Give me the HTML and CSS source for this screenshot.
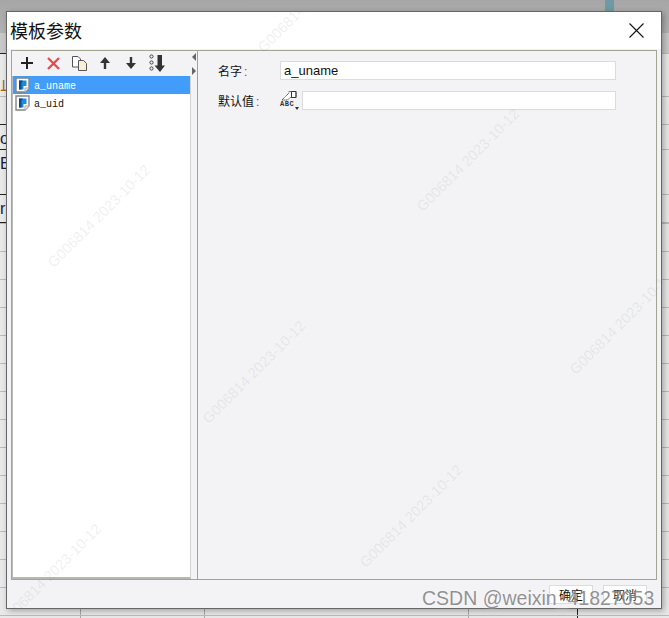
FILE: index.html
```html
<!DOCTYPE html>
<html lang="en">
<head>
  <meta charset="UTF-8">
  <meta name="viewport" content="width=device-width, initial-scale=1.0">
  <title>模板参数</title>
  <link rel="stylesheet" href="styles.css">
</head>
<body>
<div class="sheet">
  <div class="sheet-top"></div>
  <div class="sheet-head"></div>
  <div class="sheet-row first orange">止</div>
  <div class="sheet-row dark"></div>
  <div class="sheet-row short-row dark">o</div>
  <div class="sheet-row mid dark">E</div>
  <div class="sheet-row dark">r</div>
  <div class="sheet-grid"></div>
</div>
<div class="teal-tab"></div>

<div class="dialog">
  <div class="marks">
    <span class="mark m1">G006814 2023-10-12</span>
    <span class="mark m2">G006814 2023-10-12</span>
    <span class="mark m3">G006814 2023-10-12</span>
    <span class="mark m4">G006814 2023-10-12</span>
    <span class="mark m5">G006814 2023-10-12</span>
    <span class="mark m6">G006814 2023-10-12</span>
    <span class="mark m7">G006814 2023-10-12</span>
  </div>

  <div class="title-bar">
    <div class="title">模板参数</div>
    <svg class="close" width="15" height="15" viewBox="0 0 15 15"><path d="M0.5 0.5L14.5 14.5M14.5 0.5L0.5 14.5" stroke="#111" stroke-width="1.1" fill="none"/></svg>
  </div>

  <div class="content">
    <div class="panel">
      <div class="left">
        <div class="toolbar">
          <div class="tool"><svg width="14" height="14" viewBox="0 0 14 14"><path d="M7 1V13M1 7H13" stroke="#222" stroke-width="2" fill="none"/></svg></div>
          <div class="tool"><svg width="15" height="15" viewBox="0 0 15 15"><path d="M2 2L13 13M13 2L2 13" stroke="#ec4a4a" stroke-width="2.4" fill="none"/></svg></div>
          <div class="tool"><svg width="17" height="17" viewBox="0 0 17 17"><path d="M1.5 1.5H7L9.5 4V12H1.5Z" fill="#fff" stroke="#555"/><path d="M7.5 5.5H12.5L15.5 8.5V15.5H7.5Z" fill="#f8efd8" stroke="#555"/></svg></div>
          <div class="tool"><svg width="12" height="14" viewBox="0 0 12 14"><path d="M6 1L11 7H7.2V13H4.8V7H1Z" fill="#333"/></svg></div>
          <div class="tool"><svg width="12" height="14" viewBox="0 0 12 14"><path d="M6 13L11 7H7.2V1H4.8V7H1Z" fill="#333"/></svg></div>
          <div class="tool"><svg width="16" height="18" viewBox="0 0 16 18"><circle cx="2.5" cy="2.5" r="1.6" fill="none" stroke="#444"/><circle cx="2.5" cy="8.5" r="1.6" fill="none" stroke="#444"/><circle cx="2.5" cy="14.5" r="1.6" fill="none" stroke="#444"/><path d="M11 18L16 11.5H13V1H8.5V11.5H5.5Z" fill="#333"/></svg></div>
        </div>
        <div class="list">
          <div class="item selected">
            <svg class="file" width="15" height="16" viewBox="0 0 15 16"><path d="M1 1H14V11L10 15H1Z" fill="#fff" stroke="#858585" stroke-width="1.4"/><path d="M10 15V11H14" fill="#eee" stroke="#aaa"/><path d="M4 3.5H11.5V9H8.5V12.5H4Z" fill="#1a8ae0"/><path d="M4 3.5H7.5V5H6.5V12.5H4Z" fill="#0b4a8f"/></svg>
            <span>a_uname</span>
          </div>
          <div class="item">
            <svg class="file" width="15" height="16" viewBox="0 0 15 16"><path d="M1 1H14V11L10 15H1Z" fill="#fff" stroke="#858585" stroke-width="1.4"/><path d="M10 15V11H14" fill="#eee" stroke="#aaa"/><path d="M4 3.5H11.5V9H8.5V12.5H4Z" fill="#1a8ae0"/><path d="M4 3.5H7.5V5H6.5V12.5H4Z" fill="#0b4a8f"/></svg>
            <span>a_uid</span>
          </div>
        </div>
      </div>

      <div class="splitter">
        <i class="arrow-left"></i>
        <i class="arrow-right"></i>
      </div>

      <div class="right">
        <div class="field">
          <label>名字<em>:</em></label>
          <div class="input">a_uname</div>
        </div>
        <div class="field">
          <label>默认值<em>:</em></label>
          <div class="abc">
            <svg width="16" height="11" viewBox="0 0 16 11"><path d="M1 10L8 3V1.5H15V7.5H9L6.5 10Z" fill="#fff" stroke="#444" stroke-dasharray="1.2 .6"/><path d="M10.5 1.5V7.5M10.5 1.5H15V7.5H10.5" stroke="#333" fill="none"/></svg>
            <span class="abc-text">ABC</span>
            <i class="caret"></i>
          </div>
          <div class="input short"></div>
        </div>
      </div>
    </div>

    <div class="buttons">
      <button>确定</button>
      <button>取消</button>
    </div>
  </div>
</div>

<div class="csdn">CSDN @weixin_41827053</div>
</body>
</html>
```

FILE: styles.css
```css
* {
  margin: 0;
  padding: 0;
  box-sizing: border-box;
}

body {
  width: 669px;
  height: 618px;
  overflow: hidden;
  position: relative;
  background-color: #e9e9e9;
  font-family: "Liberation Sans", "Noto Sans CJK SC", sans-serif;
}

/* spreadsheet behind the dialog */
.sheet {
  height: 618px;
  overflow: hidden;
}

.sheet-top {
  height: 33px;
  background: linear-gradient(#a6a6a6, #b2b2b2);
}

.sheet-head {
  height: 21px;
  background-color: #c8c8c8;
  border-bottom: 1px solid #222;
  border-image: linear-gradient(90deg, #222 10px, #bbb 10px) 1;
}

.sheet-row {
  height: 28px;
  font-size: 16px;
  line-height: 27px;
  color: #1a1a3a;
  border-bottom: 1px solid #bbb;
}

.sheet-row.dark {
  border-image: linear-gradient(90deg, #222 10px, #bbb 10px) 1;
}

.sheet-row.first {
  height: 43px;
  line-height: 62px;
}

.sheet-row.short-row {
  height: 25px;
}

.sheet-row.mid {
  height: 45px;
}

.orange {
  color: #a8620f;
}

.sheet-grid {
  height: 400px;
  background-image:
    repeating-linear-gradient(#bbb 0, #bbb 1px, transparent 1px, transparent 28px),
    linear-gradient(90deg, transparent 80px, #aaa 80px, #aaa 81px, transparent 81px, transparent 204px, #aaa 204px, #aaa 205px, transparent 205px, transparent 468px, #aaa 468px, #aaa 469px, transparent 469px, transparent 577px, #222 577px, #222 578px, transparent 578px);
}

.teal-tab {
  position: absolute;
  left: 605px;
  top: 0;
  width: 9px;
  height: 12px;
  background-color: #6f9aa5;
}

.dialog {
  position: absolute;
  left: 6px;
  top: 11px;
  width: 656px;
  height: 598px;
  background-color: #f3f3f6;
  border: 1px solid #666;
  box-shadow: 2px 2px 6px rgba(0, 0, 0, 0.3);
  display: flex;
  flex-direction: column;
  overflow: hidden;
}

.marks {
  position: absolute;
  inset: 0;
  z-index: 2;
  pointer-events: none;
  overflow: hidden;
}

.mark {
  position: absolute;
  width: 160px;
  text-align: center;
  font-size: 14.5px;
  color: rgba(120, 120, 130, 0.13);
  white-space: nowrap;
  transform: rotate(-45deg);
}

.m1 { left: 12px; top: 196px; }
.m2 { left: 381px; top: 140px; }
.m3 { left: 167px; top: 352px; }
.m4 { left: 534px; top: 303px; }
.m5 { left: 324px; top: 496px; }
.m6 { left: 222px; top: -19px; }
.m7 { left: -37px; top: 555px; }

.title-bar {
  height: 37px;
  background-color: #fff;
  display: flex;
  justify-content: space-between;
  align-items: center;
  padding: 0 17px 1px 3px;
}

.title {
  font-size: 18px;
  color: #111;
}

.close {
  display: block;
}

.content {
  flex: 1;
  display: flex;
  flex-direction: column;
  padding: 0 4px;
}

.panel {
  height: 530px;
  margin-top: 1px;
  border: 1px solid #a3a396;
  display: flex;
}

.left {
  width: 179px;
  display: flex;
  flex-direction: column;
}

.toolbar {
  height: 25px;
  display: flex;
  align-items: center;
  padding: 0 0 1px 2px;
}

.tool {
  width: 26px;
  display: flex;
  justify-content: center;
}

.list {
  flex: 1;
  background-color: #fff;
  border-left: 1px solid #bbb;
  border-right: 1px solid #d4d4d4;
  border-bottom: 2px solid #b8b8b0;
}

.item {
  height: 18px;
  display: flex;
  align-items: center;
  gap: 4px;
  padding-left: 2px;
  font-family: "Liberation Mono", monospace;
  font-size: 10px;
  color: #111;
}

.item span {
  padding-top: 2px;
}

.item.selected {
  background-color: #429dfa;
  color: #fff;
}

.file {
  display: block;
}

.splitter {
  width: 7px;
  border-right: 1px solid #a0a0a0;
  display: flex;
  flex-direction: column;
  align-items: center;
  gap: 6px;
  padding-top: 2px;
}

.arrow-left {
  border-top: 4px solid transparent;
  border-bottom: 4px solid transparent;
  border-right: 4px solid #666;
}

.arrow-right {
  border-top: 4px solid transparent;
  border-bottom: 4px solid transparent;
  border-left: 4px solid #666;
}

.right {
  flex: 1;
  padding: 10px 0 0 20px;
  display: flex;
  flex-direction: column;
  gap: 11px;
}

.field {
  display: flex;
  align-items: center;
  height: 19px;
  width: 398px;
}

.field label {
  width: 62px;
  font-size: 12px;
  color: #111;
}

.field em {
  font-style: normal;
  color: #7a3a90;
  margin-left: 2px;
}

.input {
  flex: 1;
  height: 19px;
  background-color: #fff;
  border: 1px solid #dcdcdc;
  padding-left: 3px;
  font-size: 13px;
  line-height: 17px;
  color: #111;
}

.abc {
  position: relative;
  width: 22px;
  height: 19px;
}

.abc svg {
  display: block;
  margin: -1px 0 0 1px;
}

.abc-text {
  position: absolute;
  left: 0;
  top: 10px;
  font-family: "Liberation Mono", monospace;
  font-weight: bold;
  font-size: 7px;
  line-height: 7px;
  letter-spacing: 0.6px;
  color: #333;
}

.caret {
  position: absolute;
  left: 15px;
  top: 16px;
  border-left: 2.5px solid transparent;
  border-right: 2.5px solid transparent;
  border-top: 3px solid #333;
}

.buttons {
  display: flex;
  justify-content: flex-end;
  gap: 10px;
  padding: 5px 10px 0 0;
}

button {
  width: 44px;
  height: 19px;
  background-color: #fff;
  border: 1px solid #dcdcdc;
  font-family: "Liberation Sans", "Noto Sans CJK SC", sans-serif;
  font-size: 12px;
  color: #111;
}

.csdn {
  position: absolute;
  left: 422px;
  top: 587px;
  font-size: 19.5px;
  color: rgba(110, 110, 110, 0.75);
  text-shadow: 0 0 2px rgba(255, 255, 255, 0.8);
  white-space: nowrap;
}
```
